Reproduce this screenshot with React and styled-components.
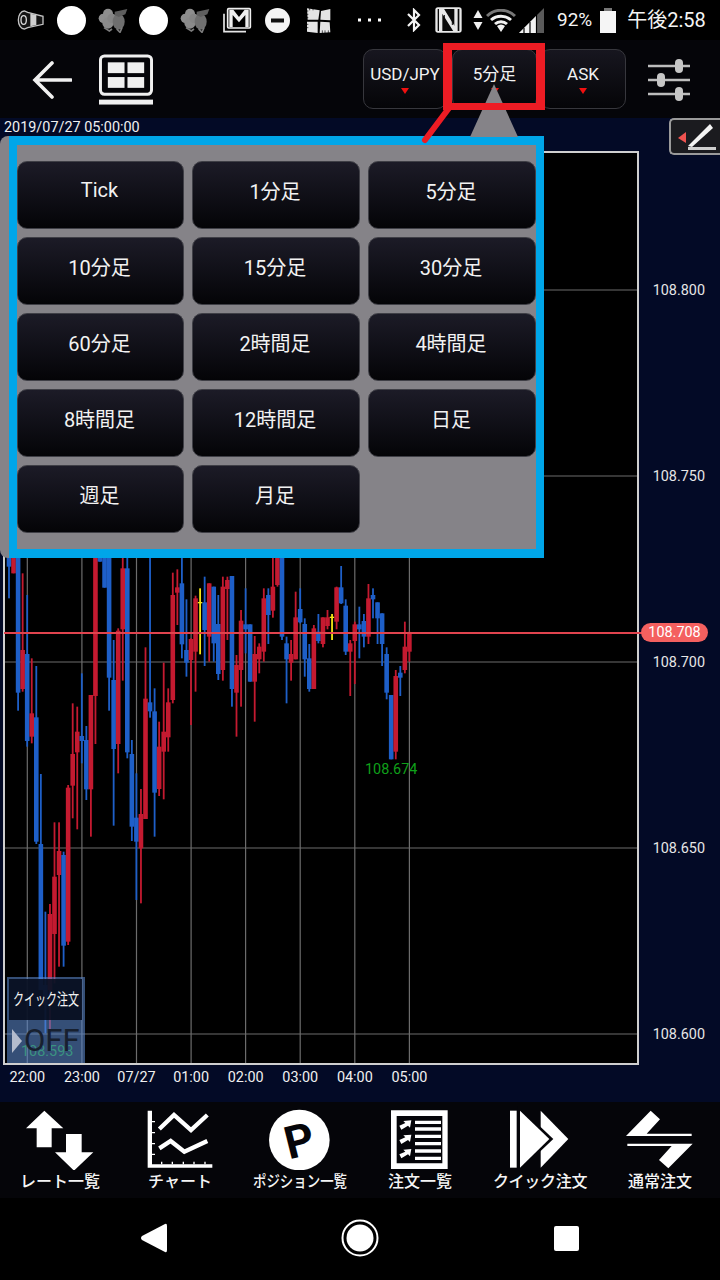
import React from "react";
import styled, { createGlobalStyle } from "styled-components";

const FONT = `Roboto, "Noto Sans CJK JP", sans-serif`;

const Global = createGlobalStyle`
  html, body { margin: 0; padding: 0; background: #000; }
  body { font-family: ${FONT}; color: #fff; }
`;

const Screen = styled.div`
  position: relative;
  width: 720px;
  height: 1280px;
  overflow: hidden;
  display: flex;
  flex-direction: column;
  background: #000;
`;

/* ---------- status bar ---------- */
const StatusBar = styled.div`
  height: 40px;
  flex: none;
  display: flex;
  align-items: center;
  padding-left: 17px;
  background: #000;
`;
const StatusIcon = styled.svg`
  flex: none;
  margin-left: ${(p) => p.$ml || 0}px;
  display: block;
`;
const StatusText = styled.span`
  margin-left: ${(p) => p.$ml || 0}px;
  font-size: ${(p) => p.$size}px;
  line-height: 40px;
  white-space: nowrap;
  color: #f4f4f4;
`;

/* ---------- header ---------- */
const Header = styled.div`
  height: 78px;
  flex: none;
  display: flex;
  align-items: center;
  padding-left: 32px;
  background: #050509;
`;
const HeaderIcon = styled.svg`
  flex: none;
  display: block;
  margin-top: 1px;
  margin-left: ${(p) => p.$ml || 0}px;
`;
const SelectButton = styled.div`
  flex: none;
  width: ${(p) => p.$w}px;
  height: 60px;
  margin-left: ${(p) => p.$ml || 0}px;
  margin-top: -1px;
  box-sizing: border-box;
  border: 1px solid #37373d;
  border-radius: 10px;
  background: linear-gradient(#17161f, #050508);
  display: flex;
  flex-direction: column;
  align-items: center;
  padding-top: 14px;
  font-size: 17px;
  line-height: 20px;
  white-space: nowrap;
  color: #f2f2f2;
`;
const Caret = styled.i`
  display: block;
  margin-top: 4px;
  width: 0;
  height: 0;
  border-left: 4px solid transparent;
  border-right: 4px solid transparent;
  border-top: 6px solid #f01010;
`;

/* ---------- chart ---------- */
const ChartArea = styled.div`
  position: relative;
  flex: none;
  height: 984px;
  background: #030a26;
  display: flex;
  flex-direction: column;
`;
const DateLabel = styled.div`
  height: 33px;
  flex: none;
  padding: 1px 0 0 4px;
  box-sizing: border-box;
  font-size: 14.4px;
  line-height: 18px;
  color: #f0f0f0;
`;
const ChartRow = styled.div`
  flex: none;
  display: flex;
  height: 914px;
`;
const Plot = styled.div`
  flex: none;
  margin-left: 3px;
  width: 636px;
  height: 914px;
  box-sizing: border-box;
  border: 2px solid #cfcfcf;
  background: #000;
`;
const PlotSvg = styled.svg`
  display: block;
`;
const PriceAxis = styled.div`
  flex: 1;
  padding-top: 47px;
  display: flex;
  flex-direction: column;
  align-items: flex-end;
  padding-right: 15px;
`;
const PriceLabel = styled.div`
  height: 186px;
  line-height: 186px;
  font-size: 14.4px;
  color: #e6e6e6;
`;
const TimeAxis = styled.div`
  display: flex;
  height: 26px;
`;
const TimeLabel = styled.div`
  width: 54.6px;
  flex: none;
  text-align: center;
  font-size: 14.4px;
  line-height: 26px;
  color: #f0f0f0;
`;
const PriceLine = styled.div`
  position: absolute;
  left: 4px;
  top: 514px;
  width: 640px;
  height: 2px;
  background: #e0434e;
`;
const PricePill = styled.div`
  position: absolute;
  left: 641px;
  top: 505px;
  width: 67px;
  height: 19px;
  border-radius: 10px;
  background: #f4605f;
  color: #fff;
  font-size: 14.4px;
  line-height: 19px;
  text-align: center;
`;
const ExtremeLabel = styled.div`
  position: absolute;
  left: ${(p) => p.$x}px;
  top: ${(p) => p.$y}px;
  font-size: 14.4px;
  line-height: 18px;
  color: #0fa01a;
`;
const PenButton = styled.div`
  position: absolute;
  right: 0;
  top: 0;
  width: 51px;
  height: 37px;
  box-sizing: border-box;
  border: 2px solid #9a9a9a;
  border-right: none;
  border-radius: 5px 0 0 5px;
  background: #1b1b1f;
`;
const QuickPanel = styled.div`
  position: absolute;
  left: 7px;
  top: 859px;
  width: 78px;
  height: 86px;
  box-sizing: border-box;
  padding: 2px 3px 0 2px;
  background: rgba(92, 136, 205, 0.58);
`;
const QuickTitle = styled.div`
  height: 41px;
  background: rgba(4, 10, 26, 0.88);
  display: flex;
  justify-content: center;
  font-size: 16px;
  line-height: 41px;
  white-space: nowrap;
  color: #f2f2f2;
`;
const Squeezed = styled.span`
  flex: none;
  display: inline-block;
  transform: scaleX(${(p) => p.$sx});
`;
const QuickState = styled.div`
  display: flex;
  align-items: center;
  height: 42px;
  padding-left: 3px;
  font-size: 31px;
  line-height: 42px;
  color: #17202f;
`;
const QuickArrow = styled.i`
  display: block;
  width: 0;
  height: 0;
  margin-right: 2px;
  border-top: 12px solid transparent;
  border-bottom: 12px solid transparent;
  border-left: 10px solid #b4bccd;
`;

/* ---------- timeframe popup ---------- */
const Popup = styled.div`
  position: absolute;
  left: 0;
  top: 136px;
  width: 544px;
  height: 422px;
  box-sizing: border-box;
  padding-left: 9px;
  background: #858388;
  border-radius: 8px 0 0 8px;
  z-index: 2;
`;
const PopupFrame = styled.div`
  height: 100%;
  box-sizing: border-box;
  border: 8px solid #00a6e9;
  border-top-width: 9px;
  border-bottom-width: 9px;
  padding-top: 16px;
`;
const FrameGrid = styled.div`
  display: grid;
  grid-template-columns: 167px 168px 168px;
  grid-auto-rows: 68px;
  gap: 8px;
`;
const TimeButton = styled.div`
  box-sizing: border-box;
  border: 1px solid #3f3f46;
  border-radius: 10px;
  background: linear-gradient(#1c1b27, #040407);
  display: flex;
  align-items: center;
  justify-content: center;
  padding: 0 2px 10px 0;
  font-size: 20px;
  color: #f2f2f2;
`;
const Pointer = styled.svg`
  position: absolute;
  left: 420px;
  top: 40px;
  z-index: 3;
`;
const Highlight = styled.div`
  position: absolute;
  left: 443px;
  top: 43px;
  width: 102px;
  height: 67px;
  box-sizing: border-box;
  border: 7px solid #ed1c24;
  border-left-width: 9px;
  border-right-width: 9px;
  z-index: 4;
`;

/* ---------- bottom nav ---------- */
const BottomNav = styled.div`
  flex: none;
  height: 96px;
  background: #050509;
  display: grid;
  grid-template-columns: repeat(6, 120px);
`;
const NavItem = styled.div`
  display: flex;
  flex-direction: column;
  align-items: center;
  padding-top: 4px;
`;
const NavIcon = styled.svg`
  display: block;
  width: 120px;
  height: 64px;
`;
const NavLabel = styled.div`
  font-size: 16px;
  font-weight: 500;
  line-height: 22px;
  margin-top: 1px;
  white-space: nowrap;
  color: #f5f5f5;
  letter-spacing: ${(p) => p.$ls || 0}px;
`;
const SystemNav = styled.div`
  flex: 1;
  background: #000;
  display: grid;
  padding-left: 50.25px;
  grid-template-columns: repeat(3, 206.5px);
`;
const SystemSlot = styled.div`
  display: flex;
  align-items: center;
  justify-content: center;
  padding-bottom: 2px;
`;

/* ---------- data ---------- */
const R = "#c41a30";
const B = "#1e5fc8";
// [colour, wick top, body top, body bottom, wick bottom] – y = 540 + v / 3
const CANDLES = [
  [B, 0, 0, 80, 175], [R, 0, 0, 100, 100], [B, 0, 0, 458, 512], [R, 100, 330, 447, 455],
  [B, 165, 342, 603, 620], [R, 355, 520, 590, 610], [B, 378, 532, 905, 912], [B, 702, 912, 1350, 1350],
  [B, 1115, 1335, 1395, 1480], [R, 1092, 1122, 1350, 1470], [R, 847, 1010, 1182, 1330], [R, 847, 933, 1005, 1280],
  [B, 935, 945, 1217, 1280], [R, 735, 743, 1205, 1215], [R, 490, 642, 737, 835], [R, 500, 575, 637, 868],
  [B, 400, 588, 603, 670], [B, 558, 600, 748, 780], [R, 465, 465, 748, 890], [R, 0, 0, 468, 612],
  [B, 0, 0, 65, 65], [B, 0, 0, 143, 143], [B, 0, 0, 413, 512], [B, 300, 420, 627, 857],
  [R, 265, 272, 612, 700], [R, 0, 85, 268, 422], [B, 0, 85, 637, 655], [B, 600, 642, 860, 903],
  [B, 700, 833, 905, 1080], [R, 747, 822, 925, 1090], [R, 322, 476, 837, 837], [B, 0, 487, 514, 533],
  [B, 445, 514, 758, 890], [R, 545, 620, 747, 768], [R, 368, 575, 635, 778], [R, 445, 487, 592, 635],
  [R, 98, 165, 480, 490], [R, 88, 142, 158, 255], [B, 52, 130, 313, 355], [B, 178, 330, 368, 410],
  [R, 295, 297, 360, 555], [R, 167, 175, 335, 455], ["#f5e616", 145, 186, 190, 343], [B, 110, 187, 270, 378],
  [R, 130, 130, 290, 365], [B, 140, 140, 310, 365], [B, 165, 252, 402, 420], [R, 110, 140, 390, 422],
  [R, 110, 120, 147, 300], [B, 108, 108, 447, 500], [R, 345, 375, 458, 590], [R, 210, 242, 390, 500],
  [B, 145, 253, 268, 340], [B, 253, 253, 425, 425], [R, 288, 342, 425, 545], [R, 310, 320, 358, 400],
  [R, 145, 175, 335, 365], [B, 145, 165, 225, 312], [R, 0, 140, 212, 233], [R, 0, 0, 135, 140],
  [B, 0, 0, 290, 300], [B, 290, 310, 358, 490], [R, 300, 342, 368, 422], [R, 155, 232, 358, 358],
  [B, 145, 207, 247, 250], [B, 235, 252, 358, 410], [B, 312, 355, 447, 455], [R, 255, 265, 447, 447],
  [B, 222, 275, 303, 310], [R, 232, 232, 312, 322], [R, 210, 232, 258, 268], ["#f5e616", 222, 230, 234, 300],
  [R, 140, 142, 245, 268], [B, 78, 142, 190, 192], [B, 178, 197, 335, 345], [R, 300, 310, 335, 468],
  [R, 245, 253, 303, 432], [B, 200, 253, 268, 355], [B, 222, 243, 290, 322], [R, 132, 175, 290, 312],
  [B, 145, 165, 178, 235], [B, 187, 187, 235, 312], [B, 220, 220, 312, 378], [B, 322, 342, 458, 478],
  [B, 465, 465, 658, 658], [R, 390, 408, 635, 658], [B, 378, 398, 413, 468], [R, 245, 320, 390, 400],
  [R, 275, 278, 335, 365],
];
const zy = (v) => 540 + v / 3;

const V_LINES = [27.3, 81.9, 136.5, 191.1, 245.6, 300.2, 354.8, 409.4];
const H_LINES = [290, 476, 662, 848, 1034];
const PRICES = ["108.800", "108.750", "108.700", "108.650", "108.600"];
const TIMES = ["22:00", "23:00", "07/27", "01:00", "02:00", "03:00", "04:00", "05:00"];
const FRAMES = ["Tick", "1分足", "5分足", "10分足", "15分足", "30分足", "60分足", "2時間足", "4時間足", "8時間足", "12時間足", "日足", "週足", "月足"];

const Sheep = ({ ml }) => (
  <StatusIcon $ml={ml} width="30" height="26" viewBox="0 0 90 78">
    <circle cx="16" cy="34" r="14" fill="#8e8e8e" />
    <circle cx="30" cy="20" r="15" fill="#8e8e8e" />
    <circle cx="30" cy="48" r="17" fill="#8a8a8a" />
    <circle cx="42" cy="34" r="14" fill="#858585" />
    <ellipse cx="62" cy="44" rx="18" ry="24" fill="#6f6f6f" />
    <path d="M50 14 L88 6 L82 22 L62 30 L50 24 Z" fill="#5e5e5e" />
    <path d="M18 62 L34 72 L42 66 M56 66 L66 76 L72 62" stroke="#7c7c7c" strokeWidth="5" fill="none" />
  </StatusIcon>
);

const Circle = ({ ml }) => (
  <StatusIcon $ml={ml} width="29" height="29" viewBox="0 0 29 29">
    <circle cx="14.5" cy="14.5" r="14.5" fill="#fff" />
  </StatusIcon>
);

export default function App() {
  return (
    <Screen>
      <Global />
      <StatusBar>
        <StatusIcon width="27" height="22" viewBox="0 0 81 66">
          <path d="M22 6 C12 6 4 18 4 33 C4 48 12 60 22 60 L32 56 L78 46 V22 L32 10 Z" fill="#141414" stroke="#c4c4c4" strokeWidth="4" />
          <path d="M40 14 L58 18 V48 L40 52 Z" fill="#cfcfcf" />
          <ellipse cx="20" cy="33" rx="8" ry="13" fill="none" stroke="#d8d8d8" strokeWidth="4" />
        </StatusIcon>
        <Circle ml={13} />
        <Sheep ml={12} />
        <Circle ml={11} />
        <Sheep ml={12} />
        <StatusIcon $ml={12} width="30" height="26" viewBox="0 0 90 78">
          <path d="M6 20 V74 H72" fill="none" stroke="#e6e6e6" strokeWidth="5" />
          <rect x="17" y="5" width="68" height="58" rx="3" fill="none" stroke="#efefef" strokeWidth="5" />
          <path d="M22 8 H34 L51 30 L68 8 H80 V60 H70 V24 L51 46 L32 24 V60 H22 Z" fill="#efefef" />
        </StatusIcon>
        <StatusIcon $ml={13} width="25" height="25" viewBox="0 0 25 25">
          <circle cx="12.5" cy="12.5" r="12.5" fill="#f4f4f4" />
          <rect x="6" y="10.5" width="13" height="4" fill="#111" />
        </StatusIcon>
        <StatusIcon $ml={15} width="27" height="27" viewBox="0 0 81 81">
          <path d="M6 4 L44 10 L40 38 L8 38 Z M48 12 L76 6 L76 40 L46 38 Z M6 44 L38 44 L38 78 L6 74 Z M46 44 L74 46 L76 76 L44 78 Z" fill="#e4e4e4" />
          <path d="M2 12 H10 M2 22 H10 M2 32 H10 M2 52 H10 M2 62 H10 M14 2 V10 M24 2 V10 M60 70 V80 M70 70 V80 M52 70 V80" stroke="#000" strokeWidth="2" />
        </StatusIcon>
        <StatusIcon $ml={26} width="23" height="4" viewBox="0 0 23 4">
          <rect x="0" y="0.5" width="3" height="3" fill="#fff" />
          <rect x="10" y="0.5" width="3" height="3" fill="#fff" />
          <rect x="20" y="0.5" width="3" height="3" fill="#fff" />
        </StatusIcon>
        <StatusIcon $ml={25} width="16" height="24" viewBox="0 0 16 24">
          <path d="M2 6 L13 17 L8 22 V2 L13 7 L2 18" fill="none" stroke="#f4f4f4" strokeWidth="2.2" />
        </StatusIcon>
        <StatusIcon $ml={13} width="27" height="26" viewBox="0 0 81 78">
          <rect x="1" y="1" width="79" height="76" rx="8" fill="#e8e8e8" />
          <rect x="8" y="6" width="65" height="66" fill="#0a0a0a" />
          <path d="M12 4 V74 H22 V20 L56 74 H68 V4 H58 V56 L26 4 Z" fill="#e8e8e8" />
          <path d="M28 24 V62 M52 16 V54" stroke="#0a0a0a" strokeWidth="3" />
        </StatusIcon>
        <StatusIcon $ml={11} width="10" height="20" viewBox="0 0 10 20">
          <path d="M5 0 L9.5 8 H0.5 Z M0.5 12 H9.5 L5 20 Z" fill="#f0f0f0" />
        </StatusIcon>
        <StatusIcon $ml={3} width="30" height="23" viewBox="0 0 30 23">
          <path d="M1 7 A20 20 0 0 1 29 7" fill="none" stroke="#777" strokeWidth="3" />
          <path d="M5 11 A15 15 0 0 1 25 11" fill="none" stroke="#f2f2f2" strokeWidth="3" />
          <path d="M9 15 A9 9 0 0 1 21 15" fill="none" stroke="#f2f2f2" strokeWidth="3" />
          <path d="M11 17 A6 6 0 0 1 19 17 L15 23 Z" fill="#f2f2f2" />
        </StatusIcon>
        <StatusIcon $ml={3} width="25" height="25" viewBox="0 0 25 25">
          <path d="M0 25 L25 0 V25 Z" fill="#5a5a5a" />
          <path d="M0 25 L17 8 V25 Z" fill="#f2f2f2" />
          <path d="M5 20 V25 M11 14 V25" stroke="#000" strokeWidth="1.2" />
          <path d="M17.5 7 V25" stroke="#000" strokeWidth="1.2" />
        </StatusIcon>
        <StatusText $ml={13} $size={19}>92%</StatusText>
        <StatusIcon $ml={8} width="16" height="25" viewBox="0 0 16 25">
          <rect x="4" y="0" width="8" height="4" fill="#777" />
          <rect x="0" y="3" width="16" height="22" fill="#f5f5f5" />
        </StatusIcon>
        <StatusText $ml={11} $size={20}>午後2:58</StatusText>
      </StatusBar>

      <Header>
        <HeaderIcon width="40" height="38" viewBox="0 0 40 38">
          <path d="M20 2 L3 19 L20 36 M3 19 H39" fill="none" stroke="#f0f0f0" strokeWidth="3.6" strokeLinecap="round" />
        </HeaderIcon>
        <HeaderIcon $ml={27} width="54" height="52" viewBox="0 0 55 52">
          <rect x="1.5" y="1.5" width="52" height="39" rx="4" fill="none" stroke="#f0f0f0" strokeWidth="3" />
          <rect x="9" y="8" width="17" height="11" fill="#f0f0f0" />
          <rect x="29" y="8" width="17" height="11" fill="#f0f0f0" />
          <rect x="9" y="23" width="17" height="11" fill="#f0f0f0" />
          <rect x="29" y="23" width="17" height="11" fill="#f0f0f0" />
          <rect x="0" y="46" width="55" height="5" fill="#f0f0f0" />
        </HeaderIcon>
        <SelectButton $w={84} $ml={210}>USD/JPY<Caret /></SelectButton>
        <SelectButton $w={85} $ml={5}>5分足<Caret /></SelectButton>
        <SelectButton $w={86} $ml={3}>ASK<Caret /></SelectButton>
        <HeaderIcon $ml={22} width="42" height="42" viewBox="0 0 42 42">
          <path d="M0 7 H42 M0 21 H42 M0 35 H42" stroke="#bdbdbd" strokeWidth="2.4" />
          <rect x="27" y="0" width="8" height="14" rx="4" fill="#c6c6c6" />
          <rect x="9" y="14" width="8" height="14" rx="4" fill="#c6c6c6" />
          <rect x="27" y="28" width="8" height="14" rx="4" fill="#c6c6c6" />
        </HeaderIcon>
      </Header>

      <ChartArea>
        <DateLabel>2019/07/27 05:00:00</DateLabel>
        <ChartRow>
          <Plot>
            <PlotSvg width="632" height="910" viewBox="5 153 632 910">
              {V_LINES.map((x) => (
                <line key={x} x1={x} x2={x} y1="153" y2="1063" stroke="#6c6c6c" strokeWidth="1.2" />
              ))}
              {H_LINES.map((y) => (
                <line key={y} x1="5" x2="637" y1={y} y2={y} stroke="#6c6c6c" strokeWidth="1.2" />
              ))}
              {CANDLES.map(([c, wt, bt, bb, wb], i) => {
                const x = 9 + i * 4.55;
                return (
                  <g key={i} fill={c}>
                    <rect x={x - 0.9} y={zy(wt)} width="1.8" height={(wb - wt) / 3} />
                    <rect x={x - 2.3} y={zy(bt)} width="4.6" height={Math.max((bb - bt) / 3, 1)} />
                  </g>
                );
              })}
            </PlotSvg>
          </Plot>
          <PriceAxis>
            {PRICES.map((p) => (
              <PriceLabel key={p}>{p}</PriceLabel>
            ))}
          </PriceAxis>
        </ChartRow>
        <TimeAxis>
          {TIMES.map((t) => (
            <TimeLabel key={t}>{t}</TimeLabel>
          ))}
        </TimeAxis>

        <PriceLine />
        <PricePill>108.708</PricePill>
        <ExtremeLabel $x={365} $y={643}>108.674</ExtremeLabel>
        <ExtremeLabel $x={21} $y={925}>108.593</ExtremeLabel>
        <PenButton>
          <svg width="49" height="33" viewBox="0 0 49 33">
            <path d="M7 18 L15 12 V23 Z" fill="#ef5350" />
            <path d="M17 26 L39 4 L42 8 L21 27 Z" fill="#f4f4f4" />
            <rect x="17" y="27" width="28" height="3" fill="#cfcfcf" />
          </svg>
        </PenButton>
        <QuickPanel>
          <QuickTitle>
            <Squeezed $sx={0.69}>クイック注文</Squeezed>
          </QuickTitle>
          <QuickState>
            <QuickArrow />
            OFF
          </QuickState>
        </QuickPanel>
      </ChartArea>

      <BottomNav>
        <NavItem>
          <NavIcon viewBox="0 33 360 192">
            <path d="M133 47 L190 100 H155 V157 H110 V100 H78 Z" fill="#fff" />
            <path d="M198 117 H245 V172 H280 L222 227 L165 172 H198 Z" fill="#fff" />
          </NavIcon>
          <NavLabel>レート一覧</NavLabel>
        </NavItem>
        <NavItem>
          <NavIcon viewBox="360 33 360 192">
            <path d="M443 47 H456 V208 H637 V218 H443 Z" fill="#fff" />
            <path d="M456 80 H465 M456 113 H465 M456 146 H465 M456 178 H465 M485 200 V208 M517 200 V208 M550 200 V208 M582 200 V208 M615 200 V208" stroke="#fff" strokeWidth="4" />
            <path d="M478 102 L522 60 L573 105 L622 60" fill="none" stroke="#fff" strokeWidth="13" />
            <path d="M478 160 L512 138 L553 170 L622 138" fill="none" stroke="#fff" strokeWidth="13" />
          </NavIcon>
          <NavLabel>チャート</NavLabel>
        </NavItem>
        <NavItem>
          <NavIcon viewBox="720 33 360 192">
            <circle cx="898" cy="135" r="91" fill="#fff" />
            <text x="854" y="184" transform="rotate(-14 898 135)" fontFamily="Roboto, sans-serif" fontWeight="700" fontSize="136" fill="#050509">P</text>
          </NavIcon>
          <NavLabel>
            <Squeezed $sx={0.84}>ポジション一覧</Squeezed>
          </NavLabel>
        </NavItem>
        <NavItem>
          <NavIcon viewBox="0 33 360 192">
            <path fillRule="evenodd" d="M93 46 H263 V222 H93 Z M110 63 V205 H247 V63 Z" fill="#fff" />
            <path d="M165 82 H243 M165 102 H243 M165 124 H243 M165 146 H243 M165 168 H243 M165 190 H243" stroke="#fff" strokeWidth="10" />
            <path d="M118 92 L136 84 L130 78 L154 76 L150 98 L144 92 L124 104 Z M118 135 L136 127 L130 121 L154 119 L150 141 L144 135 L124 147 Z M118 178 L136 170 L130 164 L154 162 L150 184 L144 178 L124 190 Z" fill="#fff" />
          </NavIcon>
          <NavLabel>注文一覧</NavLabel>
        </NavItem>
        <NavItem>
          <NavIcon viewBox="360 33 360 192">
            <rect x="450" y="47" width="20" height="171" fill="#fff" />
            <path d="M542 47 L625 132 L542 218 Z" fill="#fff" />
            <path d="M472 30 L580 132 L472 234 Z" fill="#050509" />
            <path d="M480 47 L568 132 L480 218 Z" fill="#fff" />
          </NavIcon>
          <NavLabel $ls={-0.3}>クイック注文</NavLabel>
        </NavItem>
        <NavItem>
          <NavIcon viewBox="720 33 360 192">
            <path d="M872 47 L900 73 L860 116 H995 V123 H798 Z" fill="#fff" />
            <path d="M802 146 H998 L925 220 L897 195 L935 153 H802 Z" fill="#fff" />
          </NavIcon>
          <NavLabel>通常注文</NavLabel>
        </NavItem>
      </BottomNav>

      <SystemNav>
        <SystemSlot>
          <svg width="28" height="32" viewBox="0 0 28 32">
            <path d="M25 2 Q27 1 27 4 V28 Q27 31 25 30 L2 18 Q0 16 2 14 Z" fill="#fff" />
          </svg>
        </SystemSlot>
        <SystemSlot>
          <svg width="38" height="38" viewBox="0 0 38 38">
            <circle cx="19" cy="19" r="17.5" fill="none" stroke="#fff" strokeWidth="2" />
            <circle cx="19" cy="19" r="13.5" fill="#fff" />
          </svg>
        </SystemSlot>
        <SystemSlot>
          <svg width="25" height="25" viewBox="0 0 25 25">
            <rect width="25" height="25" rx="2" fill="#fff" />
          </svg>
        </SystemSlot>
      </SystemNav>

      <Popup>
        <PopupFrame>
          <FrameGrid>
            {FRAMES.map((f) => (
              <TimeButton key={f}>{f}</TimeButton>
            ))}
          </FrameGrid>
        </PopupFrame>
      </Popup>
      <Pointer width="100" height="106" viewBox="420 40 100 106">
        <path d="M494 84 L470 137 H518 Z" fill="#858388" />
        <path d="M449 108 L425 140" stroke="#ed1c24" strokeWidth="6" strokeLinecap="round" />
      </Pointer>
      <Highlight />
    </Screen>
  );
}
